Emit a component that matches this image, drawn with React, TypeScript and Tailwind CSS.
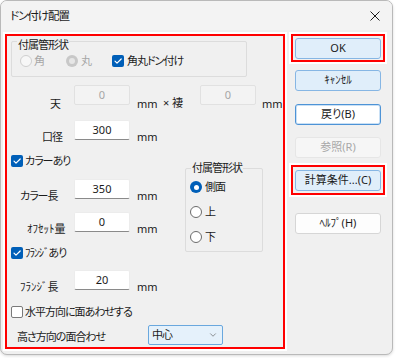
import { ChevronDown } from 'lucide-react';

const font = "font-['Noto_Sans','Noto_Sans_CJK_JP',sans-serif] [font-feature-settings:'palt']";

function TextBox({ value, disabled = false }: { value: string; disabled?: boolean }) {
  return (
    <div
      className={
        disabled
          ? 'w-[56px] h-[20px] flex items-center justify-center tracking-normal rounded-[2px] border border-[#e1e1e1] bg-[#f3f3f3] text-[#a6a6a6]'
          : 'w-[56px] h-[20px] flex items-center justify-center tracking-normal rounded-[2px] border border-[#ececec] border-b-[#8a8a8a] bg-white text-[#1b1b1b]'
      }
    >
      {value}
    </div>
  );
}

function Check({ checked = false }: { checked?: boolean }) {
  if (checked) {
    return (
      <div className="w-[12px] h-[12px] rounded-[2px] bg-[#005fb8] flex items-center justify-center shrink-0">
        <svg width="10" height="10" viewBox="0 0 10 10" fill="none">
          <path d="M2 5.2l2 2L8.2 3" stroke="white" strokeWidth="1.2" strokeLinecap="round" strokeLinejoin="round" />
        </svg>
      </div>
    );
  }
  return <div className="w-[12px] h-[12px] rounded-[2px] border border-[#7a7a7a] bg-white shrink-0" />;
}

function Radio({ state }: { state: 'off' | 'on' | 'disabledOff' | 'disabledOn' }) {
  if (state === 'on') {
    return (
      <div className="w-[12px] h-[12px] rounded-full bg-[#005fb8] flex items-center justify-center shrink-0">
        <div className="w-[5px] h-[5px] rounded-full bg-white" />
      </div>
    );
  }
  if (state === 'disabledOn') {
    return (
      <div className="w-[12px] h-[12px] rounded-full bg-[#c8c8c8] flex items-center justify-center shrink-0">
        <div className="w-[6px] h-[6px] rounded-full bg-[#e6e6e6]" />
      </div>
    );
  }
  if (state === 'disabledOff') {
    return <div className="w-[12px] h-[12px] rounded-full border border-[#cfcfcf] bg-[#f7f7f7] shrink-0" />;
  }
  return <div className="w-[12px] h-[12px] rounded-full border border-[#6b6b6b] bg-white shrink-0" />;
}

function Btn({ label, variant = 'blue' }: { label: string; variant?: 'blue' | 'focus' | 'disabled' | 'plain' }) {
  const styles = {
    blue: 'bg-[#e0eefa] border border-[#86b6e4] text-[#1b1b1b]',
    focus: 'bg-white border border-[#4d93d6] shadow-[inset_0_0_0_1px_#c9e0f5] text-[#1b1b1b]',
    disabled: 'bg-[#f6f6f6] border border-[#e6e6e6] text-[#a8a8a8]',
    plain: 'bg-[#fdfdfd] border border-[#d6d6d6] text-[#1b1b1b]'
  };
  return (
    <div className={`w-[86px] h-[21px] rounded-[3px] flex items-center justify-center text-[11px] tracking-normal ${styles[variant]}`}>
      {label}
    </div>
  );
}

function Row({ label, labelPad, value, half = false }: { label: string; labelPad: string; value: string; half?: boolean }) {
  return (
    <div className="flex h-[20px]">
      <span className={`w-[67px] shrink-0 leading-[14px] mt-[10px] ${labelPad} ${half ? 'tracking-normal' : ''}`}>{label}</span>
      <TextBox value={value} />
      <span className="ml-[7px] leading-[14px] mt-[10px] tracking-normal">mm</span>
    </div>
  );
}

export default function App() {
  return (
    <div className={`w-[398px] h-[358px] bg-white text-[11px] tracking-[-1px] text-[#1b1b1b] ${font}`}>
      <div className="w-[393px] h-[355px] rounded-[7px] border border-[#b9b9b9] bg-[#f0f0f0] overflow-hidden shadow-[0_1px_3px_rgba(0,0,0,0.15)] flex flex-col">
        {/* Title bar */}
        <div className="h-[29px] shrink-0 bg-[#f3f3f3] flex items-center justify-between pl-[9px] pr-[12px]">
          <span className="text-[11.5px] leading-[16px] mt-[1px]">ドン付け配置</span>
          <svg width="10" height="10" viewBox="0 0 10 10" fill="none">
            <path d="M0.5 0.5l9 9M9.5 0.5l-9 9" stroke="#1b1b1b" strokeWidth="1" />
          </svg>
        </div>

        {/* Body */}
        <div className="flex pl-[4px] pt-[4px]">
          {/* Left settings panel */}
          <div className="w-[280px] h-[315px] border-2 border-[#ff0000] shadow-[0_0_0_2px_#ffffff] flex flex-col">
            {/* 付属管形状 group */}
            <div className="relative ml-[4px] mt-[5px] w-[236px] h-[36px] border border-[#dcdcdc] rounded-[2px] pt-[13px] pl-[8px]">
              <span className="absolute left-[5px] -top-[4px] px-[1px] bg-[#f0f0f0] leading-[14px]">付属管形状</span>
              <div className="flex items-center h-[12px]">
                <Radio state="disabledOff" />
                <span className="ml-[2px] text-[#a6a6a6] leading-[14px]">角</span>
                <div className="ml-[22px]">
                  <Radio state="disabledOn" />
                </div>
                <span className="ml-[3px] text-[#a6a6a6] leading-[14px]">丸</span>
                <div className="ml-[21px]">
                  <Check checked />
                </div>
                <span className="ml-[3px] leading-[14px]">角丸ドン付け</span>
              </div>
            </div>

            {/* 天 × 褄 */}
            <div className="flex h-[20px] mt-[8px]">
              <span className="w-[67px] shrink-0 pl-[43px] mt-[12px] leading-[14px]">天</span>
              <TextBox value="0" disabled />
              <span className="ml-[7px] w-[26px] mt-[12px] leading-[14px] tracking-normal">mm</span>
              <span className="w-[9px] mt-[11px] leading-[14px] tracking-normal">×</span>
              <span className="w-[28px] mt-[11px] leading-[14px]">褄</span>
              <TextBox value="0" disabled />
              <span className="ml-[6px] mt-[12px] leading-[14px] tracking-normal">mm</span>
            </div>

            {/* 口径 */}
            <div className="mt-[15px]">
              <Row label="口径" labelPad="pl-[35px]" value="300" />
            </div>

            {/* カラー / オフセット / フランジ with 付属管形状 */}
            <div className="flex mt-[15px]">
              <div className="w-[178px] shrink-0 flex flex-col">
                <div className="flex items-center h-[12px] ml-[4px]">
                  <Check checked />
                  <span className="ml-[2px] leading-[14px]">カラーあり</span>
                </div>
                <div className="mt-[12px]">
                  <Row label="カラー長" labelPad="pl-[13px]" value="350" />
                </div>
                <div className="mt-[13px]">
                  <Row label="ｵﾌｾｯﾄ量" labelPad="pl-[20px]" value="0" half />
                </div>
                <div className="flex items-center h-[12px] ml-[4px] mt-[15px]">
                  <Check checked />
                  <span className="ml-[2px] leading-[14px]">ﾌﾗﾝｼﾞあり</span>
                </div>
              </div>

              <div className="relative mt-[13px] w-[78px] h-[84px] border border-[#dcdcdc] rounded-[2px] pt-[12px] pl-[4px] flex flex-col gap-[13px]">
                <span className="absolute left-[5px] -top-[8px] px-[1px] bg-[#f0f0f0] leading-[14px]">付属管形状</span>
                <div className="flex items-center h-[12px]">
                  <Radio state="on" />
                  <span className="ml-[3px] leading-[14px]">側面</span>
                </div>
                <div className="flex items-center h-[12px]">
                  <Radio state="off" />
                  <span className="ml-[3px] leading-[14px]">上</span>
                </div>
                <div className="flex items-center h-[12px]">
                  <Radio state="off" />
                  <span className="ml-[3px] leading-[14px]">下</span>
                </div>
              </div>
            </div>

            {/* フランジ長 */}
            <div className="mt-[11px]">
              <Row label="ﾌﾗﾝｼﾞ長" labelPad="pl-[13px]" value="20" half />
            </div>

            {/* 水平方向 */}
            <div className="flex items-center h-[12px] ml-[4px] mt-[16px]">
              <Check />
              <span className="ml-[2px] leading-[14px]">水平方向に面あわせする</span>
            </div>

            {/* 高さ方向 */}
            <div className="flex h-[20px] mt-[7px]">
              <span className="w-[141px] shrink-0 pl-[10px] mt-[5px] leading-[14px]">高さ方向の面合わせ</span>
              <div className="w-[75px] h-[20px] bg-[#e5f1fb] border border-[#6aa8de] rounded-[2px] flex items-center justify-between pl-[3px] pr-[4px]">
                <span className="leading-[14px]">中心</span>
                <ChevronDown size={10} strokeWidth={1.5} className="text-[#555]" />
              </div>
            </div>
          </div>

          {/* Right button column */}
          <div className="ml-[6px] w-[94px] flex flex-col">
            <div className="border-2 border-[#ff0000] shadow-[0_0_0_2px_#ffffff] pt-[2px] pb-[1px] pl-[2px]">
              <Btn label="OK" />
            </div>
            <div className="mt-[8px] ml-[4px]">
              <Btn label="ｷｬﾝｾﾙ" />
            </div>
            <div className="mt-[13px] ml-[4px]">
              <Btn label="戻り(B)" variant="focus" />
            </div>
            <div className="mt-[12px] ml-[4px]">
              <Btn label="参照(R)" variant="disabled" />
            </div>
            <div className="mt-[7px] border-2 border-[#ff0000] shadow-[0_0_0_2px_#ffffff] pt-[3px] pb-[2px] pl-[2px]">
              <Btn label="計算条件...(C)" />
            </div>
            <div className="mt-[18px] ml-[4px]">
              <Btn label="ﾍﾙﾌﾟ(H)" variant="plain" />
            </div>
          </div>
        </div>
      </div>
    </div>
  );
}
